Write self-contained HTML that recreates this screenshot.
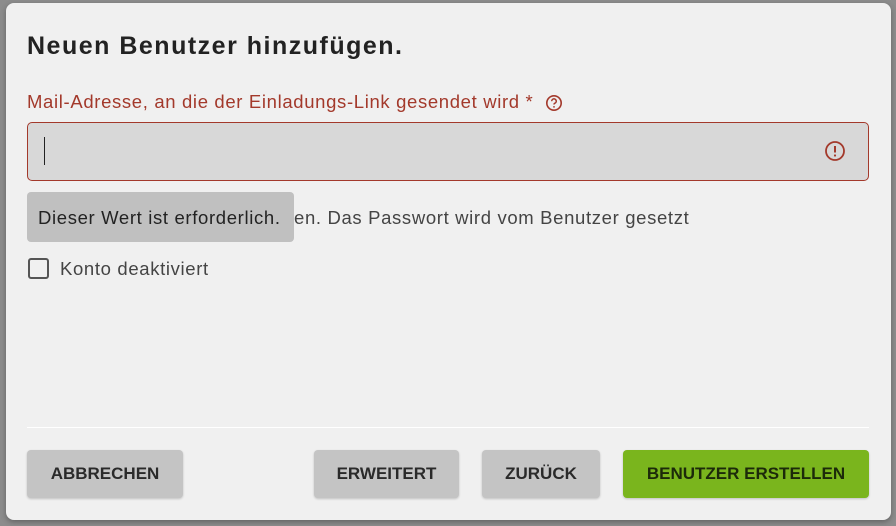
<!DOCTYPE html>
<html><head><meta charset="utf-8"><style>
body{margin:0;width:896px;height:526px;background:#8c8c8c;font-family:"Liberation Sans",sans-serif;position:relative;overflow:hidden}
.dlg{position:absolute;left:6px;top:3px;width:885px;height:517px;background:#f0f0f0;border-radius:8px;box-shadow:0 2px 6px rgba(0,0,0,.3)}
.a{position:absolute;white-space:nowrap}
.t{font-size:18.5px;letter-spacing:.65px}
.btn{position:absolute;top:447px;height:48px;background:#c4c4c4;border-radius:4px;font-size:17px;font-weight:bold;color:#2a2a2a;display:flex;align-items:center;justify-content:center;box-shadow:0 1px 2px rgba(0,0,0,.2)}
</style></head><body>
<div class="dlg">
<div class="a" style="left:21px;top:29px;font-size:25px;font-weight:bold;color:#222;letter-spacing:1.5px">Neuen Benutzer hinzufügen.</div>
<div class="a t" style="left:21px;top:88px;color:#a3392b">Mail-Adresse, an die der Einladungs-Link gesendet wird *</div>
<svg class="a" style="left:539px;top:91px" width="18" height="18" viewBox="0 0 20 20"><circle cx="10" cy="10" r="8" fill="none" stroke="#a3392b" stroke-width="1.8"/><path d="M7.5 8a2.5 2.5 0 1 1 3.5 2.2c-.7.3-1 .8-1 1.5" fill="none" stroke="#a3392b" stroke-width="1.7"/><circle cx="10" cy="14.3" r="1" fill="#a3392b"/></svg>
<div class="a" style="left:21px;top:119px;width:840px;height:57px;background:#d8d8d8;border:1px solid #a3392b;border-radius:5px"></div>
<div class="a" style="left:38px;top:134px;width:1px;height:28px;background:#222"></div>
<svg class="a" style="left:818px;top:137px" width="22" height="22" viewBox="0 0 22 22"><circle cx="11" cy="11" r="9" fill="none" stroke="#a3392b" stroke-width="1.8"/><path d="M11 6v6.5" stroke="#a3392b" stroke-width="2"/><circle cx="11" cy="15.5" r="1.1" fill="#a3392b"/></svg>
<div class="a" style="left:21px;top:189px;width:267px;height:50px;background:#c0c0c0;border-radius:4px"></div>
<div class="a t" style="left:32px;top:204px;color:#222">Dieser Wert ist erforderlich.</div>
<div class="a t" style="left:288px;top:204px;color:#444">en. Das Passwort wird vom Benutzer gesetzt</div>
<div class="a" style="left:22px;top:255px;width:17px;height:17px;border:2px solid #555;border-radius:3px"></div>
<div class="a t" style="left:54px;top:255px;color:#444">Konto deaktiviert</div>
<div class="a" style="left:21px;top:424px;width:842px;height:1px;background:#fff"></div>
<div class="btn" style="left:21px;width:156px">ABBRECHEN</div>
<div class="btn" style="left:308px;width:145px">ERWEITERT</div>
<div class="btn" style="left:476px;width:118px">ZURÜCK</div>
<div class="btn" style="left:617px;width:246px;background:#7ab51d;color:#1c2a0a">BENUTZER ERSTELLEN</div>
</div>
</body></html>
